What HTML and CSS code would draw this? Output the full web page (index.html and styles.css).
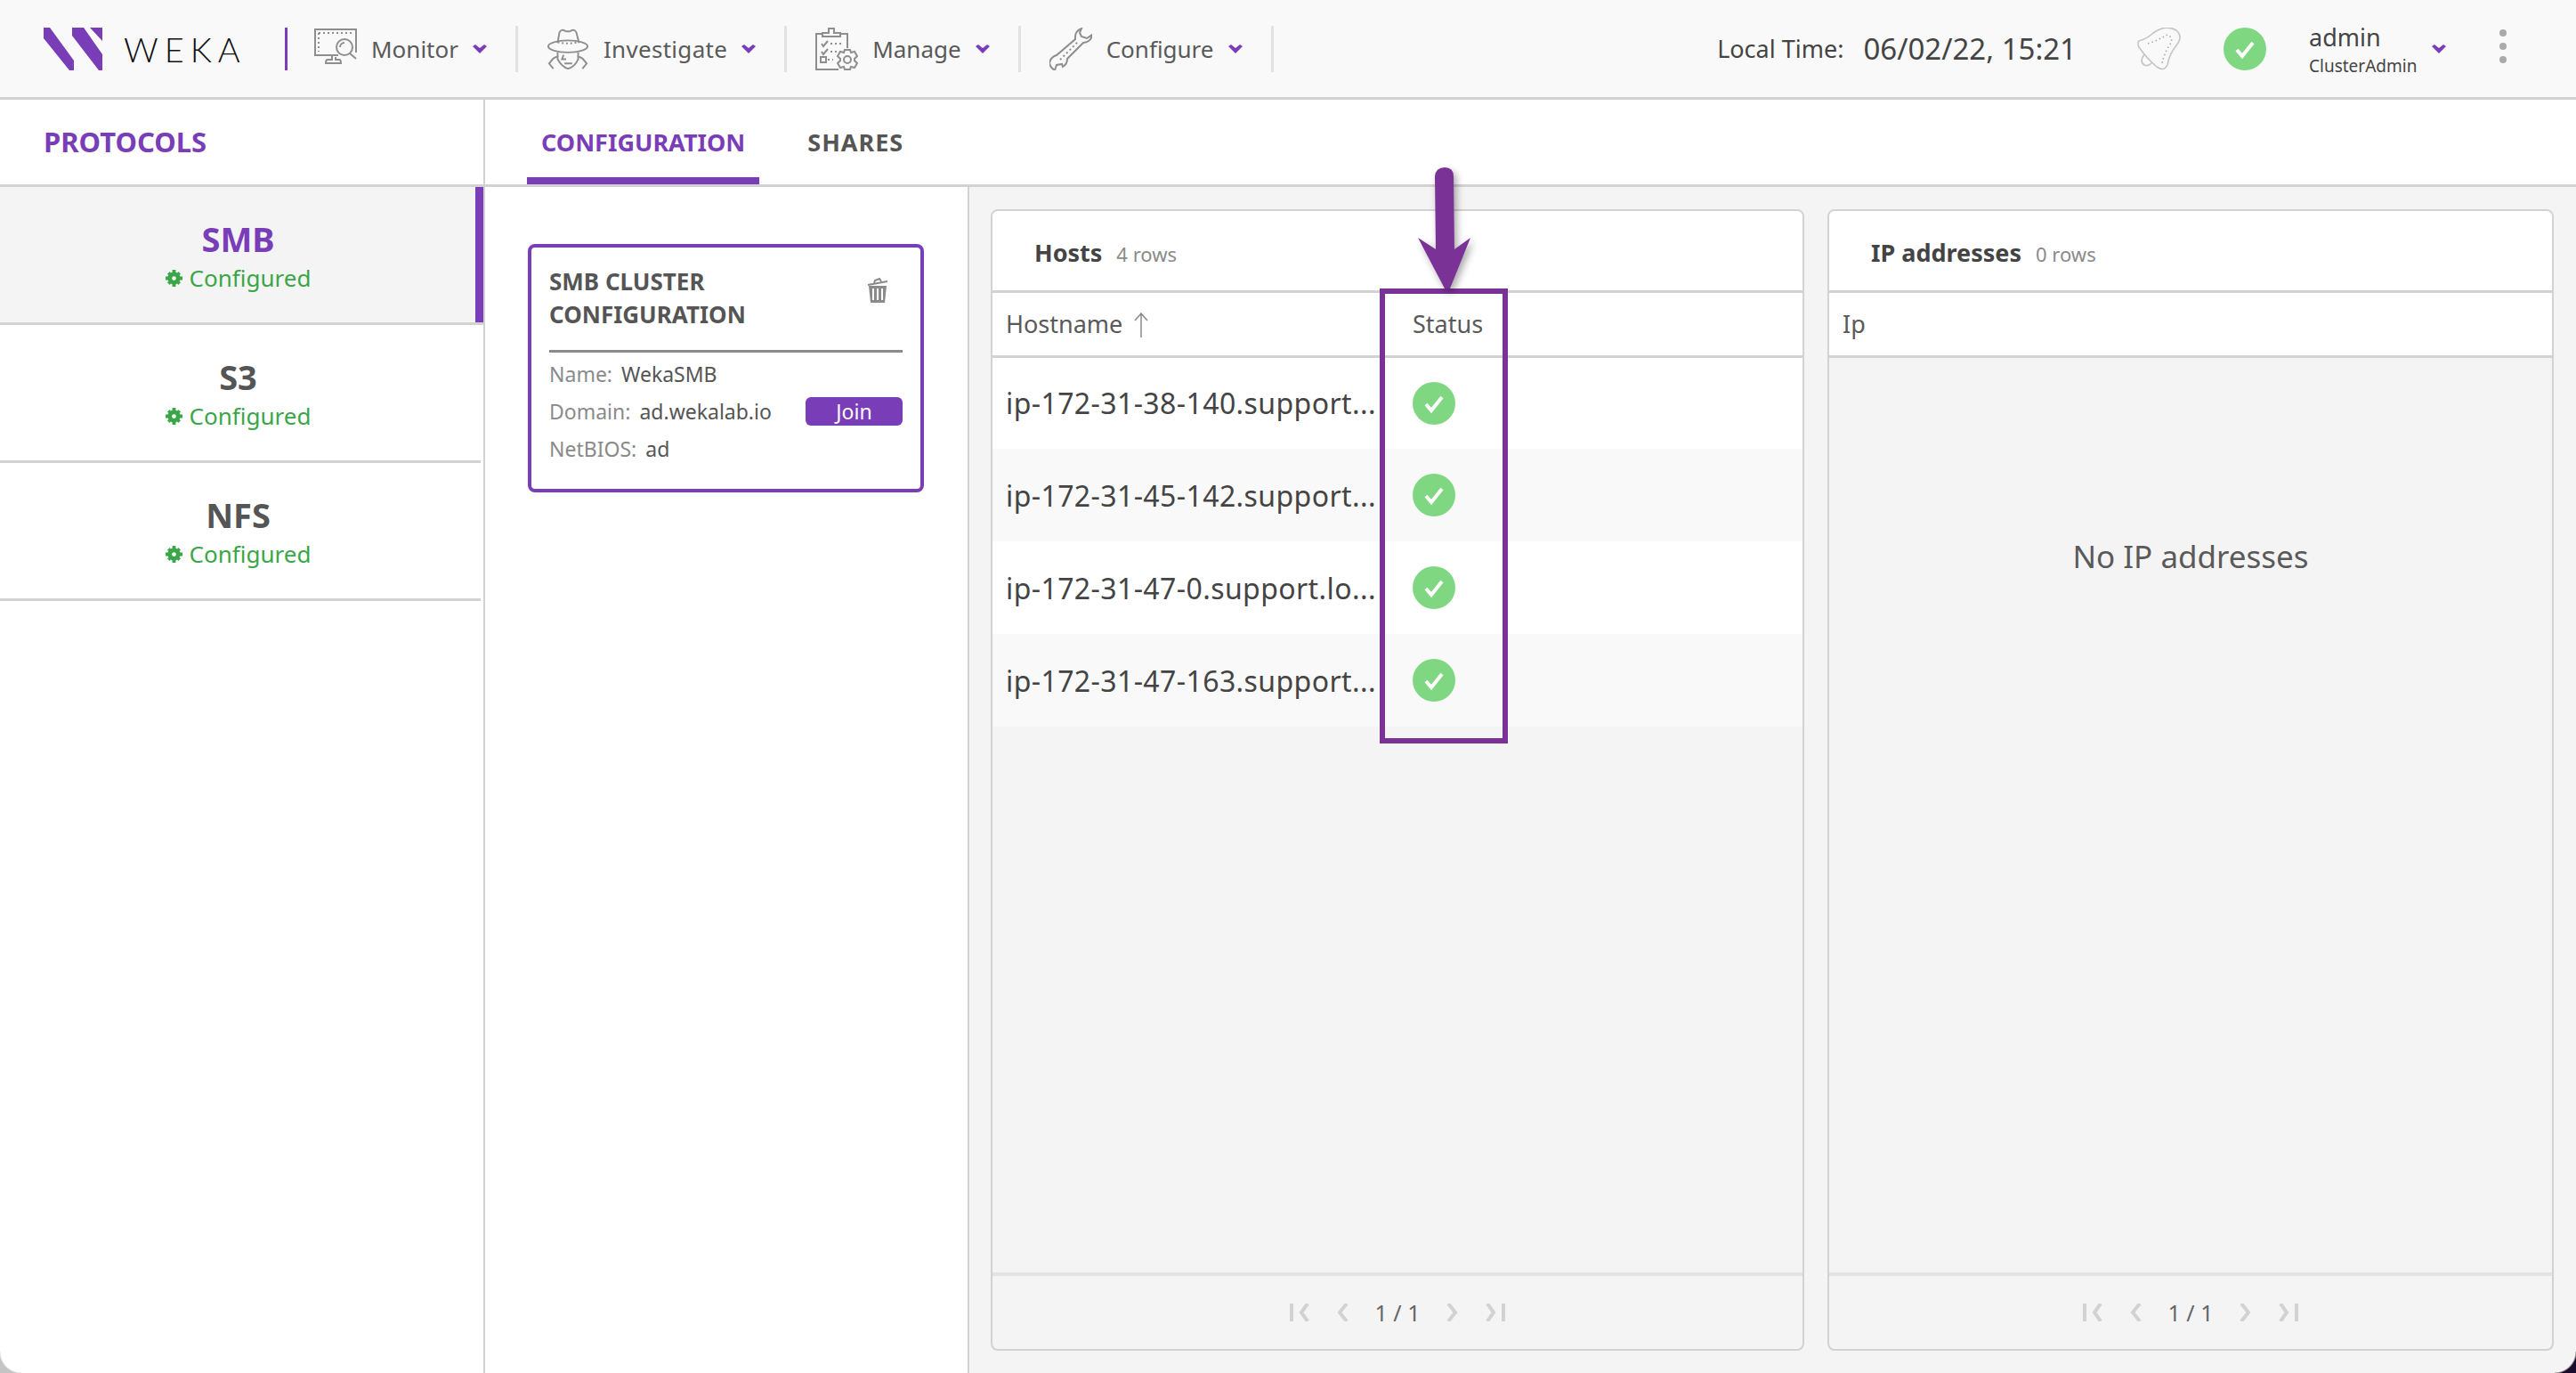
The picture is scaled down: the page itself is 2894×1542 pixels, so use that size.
FILE: index.html
```html
<!DOCTYPE html>
<html lang="en">
<head>
  <meta charset="UTF-8" />
  <title>WEKA Protocols</title>
  <link rel="stylesheet" href="styles.css">
</head>
<body>
  <header class="topbar">
    <svg class="logo" viewBox="0 0 66 48"><path fill="#7a3db8" d="M0 0H7L34 37V48H29L0 12ZM32 0H45L66 30V48H62L32 9ZM52 0H66V15Z"/></svg>
    <span class="brand">WEKA</span>
    <span class="brand-line"></span>
    <nav class="nav">
      <div class="nav-item">
        <svg class="nav-icon" viewBox="0 0 48 48" fill="none" stroke="#8e8e8e" stroke-width="2"><path d="M27 31H1V2H47V28"/><path stroke-dasharray="2 3" d="M5 6H43M5 6V27"/><path d="M20 31V36H15Q13 36 13 40H30Q30 36 28 36H24V33"/><circle cx="34" cy="22" r="9"/><path d="M40 29L47 35M29 22a5 5 0 0 1 5-5"/></svg>
        <span>Monitor</span><svg class="chev" viewBox="0 0 16 10"><path d="M0 2L3 0L8 4L13 0L16 2L8 10Z"/></svg>
      </div>
      <div class="nav-item nav-wide">
        <svg class="nav-icon" viewBox="0 0 50 48" fill="none" stroke="#8e8e8e" stroke-width="2"><path d="M13 17L15 5Q17 0 22 3Q25 4 28 3Q33 0 35 5L38 17"/><ellipse cx="25" cy="21" rx="23" ry="7"/><path stroke-dasharray="2 3" d="M13 16Q25 19 37 16"/><path d="M13 28V36Q18 45 25 47Q33 45 37 36V28M14 32L8 35L3 41L8 47M36 32L42 35L47 41L42 47M20 31L18 36H23M21 41H30"/></svg>
        <span>Investigate</span><svg class="chev" viewBox="0 0 16 10"><path d="M0 2L3 0L8 4L13 0L16 2L8 10Z"/></svg>
      </div>
      <div class="nav-item">
        <svg class="nav-icon" viewBox="0 0 48 48" fill="none" stroke="#8e8e8e" stroke-width="2"><path d="M8 7H1V47H26M29 7H36V23M8 10V6H15V1H21V6H28V10Z"/><path d="M7 18L9 21L14 15M7 27L9 30L14 24"/><path stroke-dasharray="2 3" d="M17 18H30M17 27H28M14 36H20"/><rect x="6" y="33" width="6" height="6"/><circle cx="36" cy="36" r="4"/><path d="M33 25H39L40 28L44 27L47 32L44 35V37L47 40L44 45L40 44L39 47H33L32 44L28 45L25 40L28 37V35L25 32L28 27L32 28Z"/></svg>
        <span>Manage</span><svg class="chev" viewBox="0 0 16 10"><path d="M0 2L3 0L8 4L13 0L16 2L8 10Z"/></svg>
      </div>
      <div class="nav-item">
        <svg class="nav-icon" viewBox="0 0 48 48" fill="none" stroke="#8e8e8e" stroke-width="2"><path d="M36 1Q28 4 29 13L8 31Q1 33 0 40Q1 45 6 48L8 42L14 41L15 44Q20 41 20 35L38 17Q47 16 48 8L42 12L36 10L34 6Z"/><path stroke-dasharray="2 3" d="M12 36L33 15"/></svg>
        <span>Configure</span><svg class="chev" viewBox="0 0 16 10"><path d="M0 2L3 0L8 4L13 0L16 2L8 10Z"/></svg>
      </div>
    </nav>
    <div class="clock"><span>Local Time:</span><span class="clock-value">06/02/22, 15:21</span></div>
    <svg class="bell" viewBox="0 0 50 48" fill="none" stroke="#c4c4c4" stroke-width="1.6"><path d="M2 15Q12 12 18 6Q32 -4 44 3Q52 10 44 20Q36 30 34 42Q30 50 22 44Q12 36 2 22Q0 18 2 15Z"/><path d="M8 30Q2 38 8 42Q12 44 16 40"/><path stroke="#aaa" stroke-dasharray="1.5 3" d="M12 18Q24 14 34 8Q42 12 36 20Q30 30 28 40"/></svg>
    <svg class="status-icon" viewBox="0 0 48 48"><circle cx="24" cy="24" r="24" fill="#7fd782"/><path d="M15 25L21 32L33 17" fill="none" stroke="#fff" stroke-width="4"/></svg>
    <div class="user"><span class="user-name">admin</span><span class="user-role">ClusterAdmin</span></div>
    <svg class="chev user-chev" viewBox="0 0 16 10"><path d="M0 2L3 0L8 4L13 0L16 2L8 10Z"/></svg>
    <div class="dots"><span></span><span></span><span></span></div>
  </header>

  <div class="page">
    <aside class="sidebar">
      <div class="side-title">PROTOCOLS</div>
      <div class="proto active">
        <div class="proto-name">SMB</div>
        <div class="proto-state"><svg class="gear" viewBox="0 0 20 20"><circle cx="10" cy="10" r="5" fill="none" stroke="#3aa648" stroke-width="5"/><path fill="#3aa648" d="M8 0H12V4H8ZM8 16H12V20H8ZM0 8H4V12H0ZM16 8H20V12H16ZM2 5L5 2L7 5L5 7ZM15 2L18 5L15 7L13 5ZM2 15L5 13L7 15L5 18ZM15 13L18 15L15 18L13 15Z"/></svg>Configured</div>
      </div>
      <div class="proto">
        <div class="proto-name">S3</div>
        <div class="proto-state"><svg class="gear" viewBox="0 0 20 20"><circle cx="10" cy="10" r="5" fill="none" stroke="#3aa648" stroke-width="5"/><path fill="#3aa648" d="M8 0H12V4H8ZM8 16H12V20H8ZM0 8H4V12H0ZM16 8H20V12H16ZM2 5L5 2L7 5L5 7ZM15 2L18 5L15 7L13 5ZM2 15L5 13L7 15L5 18ZM15 13L18 15L15 18L13 15Z"/></svg>Configured</div>
      </div>
      <div class="proto">
        <div class="proto-name">NFS</div>
        <div class="proto-state"><svg class="gear" viewBox="0 0 20 20"><circle cx="10" cy="10" r="5" fill="none" stroke="#3aa648" stroke-width="5"/><path fill="#3aa648" d="M8 0H12V4H8ZM8 16H12V20H8ZM0 8H4V12H0ZM16 8H20V12H16ZM2 5L5 2L7 5L5 7ZM15 2L18 5L15 7L13 5ZM2 15L5 13L7 15L5 18ZM15 13L18 15L15 18L13 15Z"/></svg>Configured</div>
      </div>
    </aside>

    <main class="main">
      <div class="tabs">
        <div class="tab active">CONFIGURATION</div>
        <div class="tab">SHARES</div>
      </div>
      <div class="content">
        <section class="config">
          <div class="card">
            <div class="card-head">
              <div class="card-title">SMB CLUSTER CONFIGURATION</div>
              <svg class="trash" viewBox="0 0 26 28"><path fill="none" stroke="#8a8a8a" stroke-width="2" d="M2 8L24 4M9 6L10 3L15 1L17 4"/><path fill="#8a8a8a" d="M3 9H23L21 28H5ZM7 12V25H9V12ZM12 12V25H14V12ZM17 12V25H19V12Z" fill-rule="evenodd"/></svg>
            </div>
            <div class="card-row"><span class="card-label">Name:</span><span>WekaSMB</span></div>
            <div class="card-row"><span class="card-label">Domain:</span><span>ad.wekalab.io</span><span class="join">Join</span></div>
            <div class="card-row"><span class="card-label">NetBIOS:</span><span>ad</span></div>
          </div>
        </section>

        <section class="tables">
          <div class="panel hosts">
            <div class="panel-head"><b>Hosts</b><span>4 rows</span></div>
            <table>
              <thead>
                <tr><th class="col-host">Hostname <svg class="sort" viewBox="0 0 16 28" fill="none" stroke="#8a8a8a" stroke-width="1.5"><path d="M8 28V1M1 9L8 1L15 9"/></svg></th><th>Status</th></tr>
              </thead>
              <tbody>
                <tr><td class="host">ip-172-31-38-140.support...</td><td><svg class="ok" viewBox="0 0 48 48"><circle cx="24" cy="24" r="24" fill="#7fd782"/><path d="M15 25L21 32L33 17" fill="none" stroke="#fff" stroke-width="4"/></svg></td></tr>
                <tr><td class="host">ip-172-31-45-142.support...</td><td><svg class="ok" viewBox="0 0 48 48"><circle cx="24" cy="24" r="24" fill="#7fd782"/><path d="M15 25L21 32L33 17" fill="none" stroke="#fff" stroke-width="4"/></svg></td></tr>
                <tr><td class="host">ip-172-31-47-0.support.lo...</td><td><svg class="ok" viewBox="0 0 48 48"><circle cx="24" cy="24" r="24" fill="#7fd782"/><path d="M15 25L21 32L33 17" fill="none" stroke="#fff" stroke-width="4"/></svg></td></tr>
                <tr><td class="host">ip-172-31-47-163.support...</td><td><svg class="ok" viewBox="0 0 48 48"><circle cx="24" cy="24" r="24" fill="#7fd782"/><path d="M15 25L21 32L33 17" fill="none" stroke="#fff" stroke-width="4"/></svg></td></tr>
              </tbody>
            </table>
            <div class="panel-fill"></div>
            <div class="pager">
              <svg class="pg" viewBox="0 0 22 20"><path d="M2 0V20M20 0L13 10L20 20"/></svg>
              <svg class="pg pg-small" viewBox="0 0 14 20"><path d="M12 0L4 10L12 20"/></svg>
              <span>1 / 1</span>
              <svg class="pg pg-small" viewBox="0 0 14 20"><path d="M2 0L10 10L2 20"/></svg>
              <svg class="pg" viewBox="0 0 22 20"><path d="M2 0L9 10L2 20M20 0V20"/></svg>
            </div>
          </div>
          <div class="panel ips">
            <div class="panel-head"><b>IP addresses</b><span>0 rows</span></div>
            <table>
              <thead><tr><th>Ip</th></tr></thead>
            </table>
            <div class="panel-fill empty"><span>No IP addresses</span></div>
            <div class="pager">
              <svg class="pg" viewBox="0 0 22 20"><path d="M2 0V20M20 0L13 10L20 20"/></svg>
              <svg class="pg pg-small" viewBox="0 0 14 20"><path d="M12 0L4 10L12 20"/></svg>
              <span>1 / 1</span>
              <svg class="pg pg-small" viewBox="0 0 14 20"><path d="M2 0L10 10L2 20"/></svg>
              <svg class="pg" viewBox="0 0 22 20"><path d="M2 0L9 10L2 20M20 0V20"/></svg>
            </div>
          </div>
        </section>
      </div>
    </main>
  </div>

  <!-- annotation drawn on top of the screenshot -->
  <div class="mark-box"></div>
  <svg class="mark-arrow" viewBox="0 0 60 136"><path fill="#7a3296" d="M19 10Q20 0 30 0Q40 0 40 10L41 92L59 79L36 136L30 136L0 79L20 92Z"/></svg>

  <!-- window corners -->
  <div class="corner corner-left"></div>
  <div class="corner corner-right"></div>
</body>
</html>
```

FILE: styles.css
```css
* {
  box-sizing: border-box;
}
html, body {
  margin: 0;
  height: 100%;
}
body {
  width: 2894px;
  height: 1542px;
  overflow: hidden;
  position: relative;
  font-family: "Noto Sans", sans-serif;
  color: #555;
  background-color: #fff;
}

/* top bar */
.topbar {
  display: flex;
  align-items: center;
  height: 112px;
  padding-left: 49px;
  background-color: #f9f9f9;
  border-bottom: 3px solid #d2d2d2;
}
.logo {
  width: 66px;
  height: 48px;
  flex: none;
}
.brand {
  margin-left: 24px;
  width: 157px;
  font-family: Lato, sans-serif;
  font-weight: 300;
  font-size: 38px;
  letter-spacing: 7px;
  color: #111;
}
.brand-line {
  width: 3px;
  height: 48px;
  margin-left: 24px;
  background-color: #7a3db8;
}
.nav {
  display: flex;
  align-items: center;
}
.nav-item {
  display: flex;
  align-items: center;
  height: 52px;
  padding: 0 32px;
  border-right: 3px solid #e2e2e2;
  font-size: 26px;
  color: #5a5a5a;
}
.nav-item:first-child {
  padding-left: 30px;
}
.nav-wide span {
  letter-spacing: 0.3px;
}
.nav-icon {
  width: 48px;
  height: 48px;
  margin-right: 16px;
  flex: none;
}
.nav-item span {
  flex: none;
}
.chev {
  width: 16px;
  height: 10px;
  margin-left: 16px;
  fill: #7a3db8;
  flex: none;
}
.clock {
  display: flex;
  align-items: center;
  gap: 22px;
  margin-left: auto;
  font-size: 27px;
  color: #444;
}
.clock-value {
  font-size: 33px;
  line-height: 36px;
}
.bell {
  width: 50px;
  height: 48px;
  margin-left: 68px;
}
.status-icon {
  width: 48px;
  height: 48px;
  margin-left: 47px;
}
.user {
  display: flex;
  flex-direction: column;
  width: 122px;
  margin: 4px 0 0 48px;
}
.user-name {
  font-size: 27px;
  line-height: 34px;
  color: #444;
}
.user-role {
  font-size: 19px;
  line-height: 30px;
  color: #444;
}
.user-chev {
  margin-left: 16px;
}
.dots {
  display: flex;
  flex-direction: column;
  gap: 7px;
  margin: -6px 78px 0 60px;
}
.dots span {
  width: 8px;
  height: 8px;
  border-radius: 50%;
  background-color: #aaa;
}

/* body layout */
.page {
  display: flex;
  height: 1430px;
}
.sidebar {
  width: 545px;
  flex: none;
  border-right: 2px solid #d2d2d2;
}
.side-title {
  height: 98px;
  padding-left: 49px;
  font-size: 31px;
  line-height: 94px;
  font-weight: 700;
  color: #7a3db8;
  border-bottom: 3px solid #d2d2d2;
}
.proto {
  height: 155px;
  padding: 33px 5px 0 0;
  margin-right: 3px;
  text-align: center;
  border-bottom: 3px solid #d2d2d2;
}
.proto.active {
  margin-right: 0;
  padding-right: 8px;
  background-color: #f4f4f4;
  box-shadow: inset -9px 0 0 #7a3db8;
}
.proto-name {
  font-size: 38px;
  line-height: 50px;
  font-weight: 700;
}
.proto.active .proto-name {
  color: #7a3db8;
}
.proto-state {
  display: flex;
  align-items: center;
  justify-content: center;
  gap: 8px;
  font-size: 26px;
  line-height: 38px;
  color: #3aa648;
}
.gear {
  width: 19px;
  height: 19px;
}

.main {
  flex: 1;
  display: flex;
  flex-direction: column;
}
.tabs {
  display: flex;
  gap: 38px;
  height: 98px;
  padding-left: 47px;
  border-bottom: 3px solid #d2d2d2;
}
.tab {
  height: 95px;
  padding: 0 16px;
  font-size: 27px;
  line-height: 96px;
  font-weight: 700;
  color: #555;
  letter-spacing: 1px;
}
.tab.active {
  color: #7a3db8;
  border-bottom: 8px solid #7a3db8;
  letter-spacing: 0;
}
.content {
  flex: 1;
  display: flex;
}

/* config card */
.config {
  width: 544px;
  flex: none;
  padding: 64px 49px 0 48px;
  border-right: 2px solid #d2d2d2;
}
.card {
  height: 279px;
  padding: 20px 20px 0 20px;
  border: 4px solid #7a3db8;
  border-radius: 8px;
}
.card-head {
  display: flex;
  justify-content: space-between;
  height: 98px;
  border-bottom: 3px solid #8a8a8a;
}
.card-title {
  width: 300px;
  font-size: 26px;
  line-height: 37px;
  font-weight: 700;
}
.trash {
  width: 26px;
  height: 28px;
  margin: 14px 15px 0 0;
}
.card-row {
  display: flex;
  align-items: center;
  gap: 10px;
  height: 42px;
  font-size: 23px;
}
.card-head + .card-row {
  margin-top: 3px;
}
.card-label {
  color: #8a8a8a;
}
.join {
  width: 109px;
  height: 32px;
  margin-left: auto;
  border-radius: 6px;
  background-color: #7a3db8;
  color: #fff;
  text-align: center;
  line-height: 32px;
}

/* tables */
.tables {
  flex: 1;
  display: flex;
  gap: 26px;
  padding: 25px 25px 25px 24px;
  background-color: #f4f4f4;
}
.panel {
  display: flex;
  flex-direction: column;
  border: 2px solid #d2d2d2;
  border-radius: 8px;
  background-color: #f4f4f4;
  overflow: hidden;
}
.hosts {
  width: 914px;
  flex: none;
}
.ips {
  flex: 1;
}
.panel-head {
  display: flex;
  align-items: baseline;
  gap: 16px;
  height: 92px;
  padding: 28px 0 0 47px;
  background-color: #fff;
  border-bottom: 3px solid #d2d2d2;
}
.panel-head b {
  font-size: 27px;
  color: #444;
}
.panel-head span {
  font-size: 22px;
  color: #8a8a8a;
}
table {
  width: 100%;
  border-collapse: collapse;
  table-layout: fixed;
  background-color: #fff;
}
th {
  height: 71px;
  padding: 0 0 0 15px;
  text-align: left;
  font-size: 27px;
  font-weight: 400;
  color: #5a5a5a;
  border-bottom: 3px solid #d2d2d2;
}
.col-host {
  width: 455px;
}
.hosts th + th {
  padding-left: 17px;
}
.sort {
  width: 16px;
  height: 28px;
  margin-left: 6px;
  vertical-align: -5px;
}
td {
  height: 104px;
  padding: 0 0 0 15px;
}
td + td {
  padding-left: 17px;
}
tbody tr:nth-child(even) {
  background-color: #f9f9f9;
}
.host {
  font-size: 32px;
  letter-spacing: 0.4px;
  color: #444;
  white-space: nowrap;
}
.ok {
  display: block;
  width: 48px;
  height: 48px;
}
.panel-fill {
  flex: 1;
}
.empty {
  display: flex;
  justify-content: center;
  padding-top: 199px;
  font-size: 35px;
  color: #5a5a5a;
}
.pager {
  display: flex;
  align-items: center;
  justify-content: center;
  gap: 30px;
  height: 86px;
  border-top: 4px solid #e3e3e3;
  font-size: 25px;
  color: #666;
}
.pg {
  width: 22px;
  height: 20px;
  fill: none;
  stroke: #d2d2d2;
  stroke-width: 4;
}
.pg-small {
  width: 14px;
}

/* purple annotation */
.mark-box {
  position: absolute;
  left: 1550px;
  top: 324px;
  width: 144px;
  height: 511px;
  border: 6px solid #7a3296;
}
.mark-arrow {
  position: absolute;
  left: 1593px;
  top: 188px;
  width: 60px;
  height: 136px;
  filter: drop-shadow(3px 4px 4px rgba(0, 0, 0, 0.35));
}

.corner {
  position: absolute;
  bottom: 0;
  width: 24px;
  height: 24px;
}
.corner-left {
  left: 0;
  background: radial-gradient(circle at top right, transparent 23px, #c4c4c4 25px);
}
.corner-right {
  right: 0;
  background: radial-gradient(circle at top left, transparent 23px, #1c0c2c 25px);
}
```
